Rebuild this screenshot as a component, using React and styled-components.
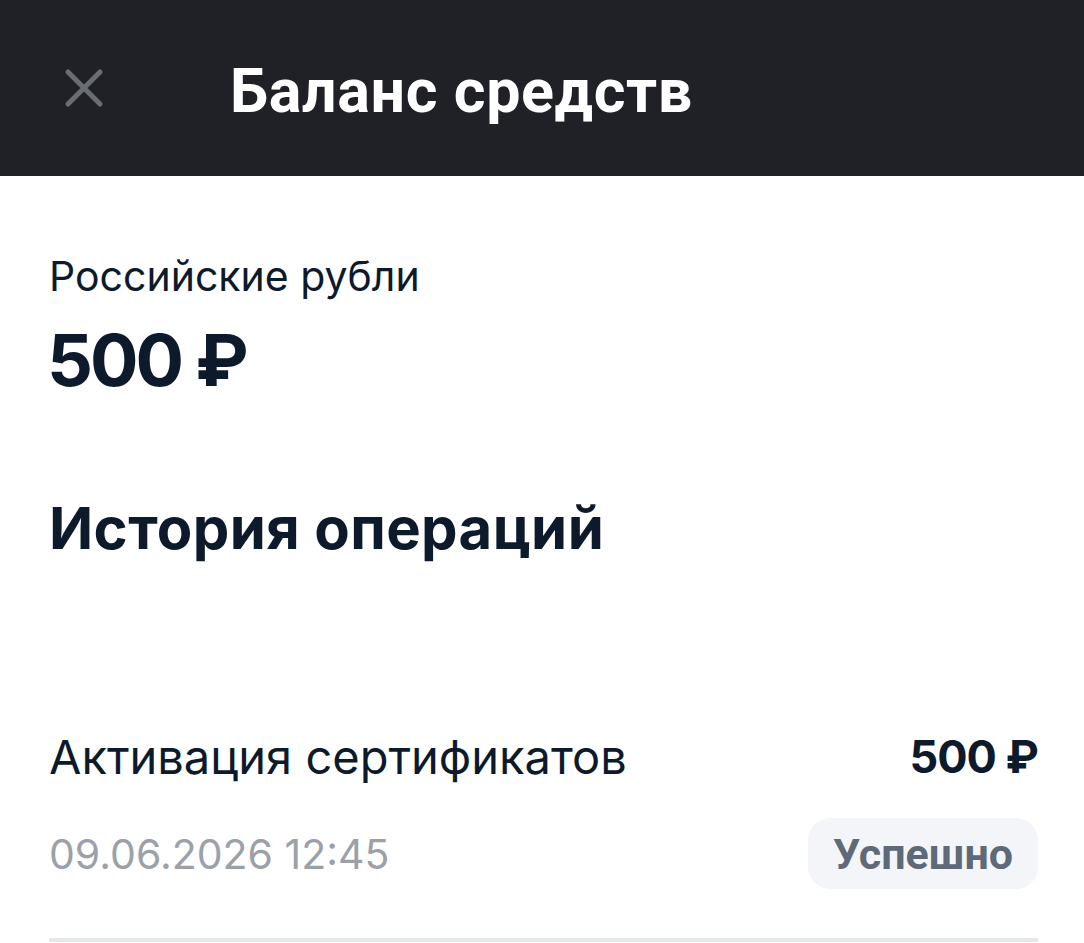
import React from "react";
import styled, { createGlobalStyle } from "styled-components";

const GlobalStyle = createGlobalStyle`
  html, body {
    margin: 0;
    padding: 0;
    background: #ffffff;
  }
  * {
    box-sizing: border-box;
  }
`;

const Page = styled.div`
  width: 1084px;
  min-height: 943px;
  overflow: hidden;
  font-family: Inter, "Noto Sans", sans-serif;
  color: #0c1a2c;
`;

const Header = styled.header`
  height: 176px;
  background-color: #1f2126;
  display: flex;
  align-items: center;
  padding: 0 0 0 62px;
`;

const CloseButton = styled.button`
  width: 44px;
  height: 44px;
  padding: 0;
  border: none;
  background: transparent;
  display: flex;
  align-items: center;
  justify-content: center;
  margin-right: 124px;
`;

const HeaderTitle = styled.h1`
  margin: 6px 0 0;
  color: #ffffff;
  font-family: Roboto, "Liberation Sans", sans-serif;
  font-weight: 700;
  font-size: 61px;
  line-height: 70px;
  letter-spacing: 0.6px;
`;

const Content = styled.main`
  padding: 0 46px 0 49px;
`;

const Currency = styled.div`
  margin-top: 76px;
  font-size: 41px;
  line-height: 48px;
  font-weight: 400;
`;

const Amount = styled.div`
  margin-top: 20px;
  margin-left: -2px;
  font-size: 72px;
  line-height: 80px;
  font-weight: 700;
  letter-spacing: -3px;
`;

const SectionTitle = styled.h2`
  margin: 95px 0 0;
  font-size: 58px;
  line-height: 66px;
  font-weight: 700;
  letter-spacing: 0.4px;
`;

const Operation = styled.div`
  margin-top: 168px;
  border-bottom: 4px solid #e4e8ee;
  padding-bottom: 49px;
`;

const Row = styled.div`
  display: flex;
  align-items: center;
  justify-content: space-between;
  margin-top: ${({ $gap }) => $gap || 0}px;
`;

const OperationName = styled.div`
  font-size: 47px;
  line-height: 56px;
  font-weight: 400;
`;

const OperationSum = styled.div`
  font-size: 45px;
  line-height: 56px;
  font-weight: 700;
  letter-spacing: -1px;
`;

const OperationDate = styled.div`
  font-size: 41px;
  line-height: 48px;
  color: #9ba1a9;
`;

const StatusBadge = styled.div`
  height: 71px;
  padding: 0 25px;
  border-radius: 22px;
  background-color: #f3f5f8;
  color: #5e6a78;
  display: flex;
  align-items: center;
  font-family: Roboto, "Liberation Sans", sans-serif;
  font-size: 43px;
  font-weight: 700;
`;

const CloseIcon = () => (
  <svg width="40" height="40" viewBox="0 0 40 40" fill="none">
    <path
      d="M4 4 L36 36 M36 4 L4 36"
      stroke="#6a6d71"
      strokeWidth="5"
      strokeLinecap="round"
    />
  </svg>
);

export default function App() {
  return (
    <Page>
      <GlobalStyle />
      <Header>
        <CloseButton aria-label="Закрыть">
          <CloseIcon />
        </CloseButton>
        <HeaderTitle>Баланс средств</HeaderTitle>
      </Header>
      <Content>
        <Currency>Российские рубли</Currency>
        <Amount>500 ₽</Amount>
        <SectionTitle>История операций</SectionTitle>
        <Operation>
          <Row>
            <OperationName>Активация сертификатов</OperationName>
            <OperationSum>500 ₽</OperationSum>
          </Row>
          <Row $gap={33}>
            <OperationDate>09.06.2026 12:45</OperationDate>
            <StatusBadge>Успешно</StatusBadge>
          </Row>
        </Operation>
      </Content>
    </Page>
  );
}
